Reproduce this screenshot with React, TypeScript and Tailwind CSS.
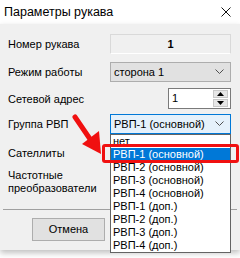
import { ReactNode } from 'react';

const items = [
  'нет',
  'РВП-1 (основной)',
  'РВП-2 (основной)',
  'РВП-3 (основной)',
  'РВП-4 (основной)',
  'РВП-1 (доп.)',
  'РВП-2 (доп.)',
  'РВП-3 (доп.)',
  'РВП-4 (доп.)',
];

function Chevron() {
  return (
    <svg width="9" height="6" viewBox="0 0 9 6" className="shrink-0">
      <path d="M0.5 0.5 L4.5 4.5 L8.5 0.5" fill="none" stroke="#505050" strokeWidth="1" />
    </svg>
  );
}

function Row({ label, children, className }: { label: ReactNode; children?: ReactNode; className: string }) {
  return (
    <div className={`flex items-center justify-between pl-2 pr-[9px] ${className}`}>
      <span className="leading-[14px]">{label}</span>
      {children}
    </div>
  );
}

export default function App() {
  return (
    <div className="relative w-[240px] h-[258px] overflow-hidden bg-white text-[11px] text-black font-['Liberation_Sans',sans-serif]">
      {/* заголовок окна */}
      <div className="flex items-center justify-between h-[24px] pl-[4px] pr-[9px] bg-white">
        <span className="text-[12.5px]">Параметры рукава</span>
        <svg width="10" height="10" viewBox="0 0 10 10">
          <path d="M0.5 0.5 L9.5 9.5 M9.5 0.5 L0.5 9.5" stroke="#111" strokeWidth="1" />
        </svg>
      </div>

      {/* тело диалога */}
      <div className="flex flex-col h-[226px] bg-[#f0f0f0] pt-[10px] shadow-[0_3px_6px_rgba(0,0,0,0.25)]">
        <Row label="Номер рукава" className="h-[20px]">
          <div className="flex items-center justify-center w-[121px] h-[20px] border border-[#d9d9d9] border-b-white font-bold">1</div>
        </Row>

        <Row label="Режим работы" className="h-[20px] mt-[8px]">
          <div className="flex items-center justify-between w-[121px] h-[20px] border border-[#adadad] bg-[#e1e1e1] pl-[3px] pr-[6px]">
            <span>сторона 1</span>
            <Chevron />
          </div>
        </Row>

        <Row label="Сетевой адрес" className="h-[21px] mt-[6px]">
          <div className="flex items-center justify-between w-[63px] h-[21px] border border-[#7a7a7a] bg-white pl-[3px] pr-[2px]">
            <span>1</span>
            <div className="flex flex-col gap-px">
              <div className="flex items-center justify-center w-[15px] h-[8px] bg-[#e6e6e6] border border-[#c8c8c8]">
                <svg width="7" height="4" viewBox="0 0 7 4"><path d="M3.5 0 L7 4 L0 4 Z" fill="#000" /></svg>
              </div>
              <div className="flex items-center justify-center w-[15px] h-[8px] bg-[#e6e6e6] border border-[#c8c8c8]">
                <svg width="7" height="4" viewBox="0 0 7 4"><path d="M0 0 L7 0 L3.5 4 Z" fill="#000" /></svg>
              </div>
            </div>
          </div>
        </Row>

        <Row label="Группа РВП" className="h-[20px] mt-[5px]">
          <div className="flex items-center justify-between w-[121px] h-[20px] border border-[#0078d7] bg-[#e5f1fb] pl-[3px] pr-[6px]">
            <span>РВП-1 (основной)</span>
            <Chevron />
          </div>
        </Row>

        <Row label="Сателлиты" className="h-[14px] mt-[12px]" />

        <div className="pl-2 mt-[9px] leading-[13px]">
          Частотные
          <br />
          преобразователи
        </div>

        <div className="mx-[3px] mt-[14px] h-px bg-[#a0a0a0]" />

        <div className="flex pl-[32px] mt-[8px]">
          <div className="flex items-center justify-center w-[73px] h-[23px] border border-[#adadad] bg-[#e1e1e1]">Отмена</div>
        </div>
      </div>

      {/* раскрытый список */}
      <div className="absolute left-[110px] top-[134px] w-[121px] border border-[#646464] bg-white">
        {items.map((it, i) => (
          <div
            key={it}
            className={`h-[13px] leading-[13px] pl-[2px] ${i === 1 ? 'bg-[#0078d7] text-white' : ''}`}
          >
            {it}
          </div>
        ))}
      </div>

      {/* красная рамка */}
      <div className="absolute left-[102px] top-[144px] w-[137px] h-[19px] border-[3px] border-[#f01010] rounded-[3px]" />

      {/* красная стрелка */}
      <svg className="absolute left-0 top-0" width="240" height="258" viewBox="0 0 240 258">
        <line x1="75" y1="117" x2="90" y2="139" stroke="#f01010" strokeWidth="5" strokeLinecap="round" />
        <polygon points="101,154 82,144 99,131" fill="#f01010" />
      </svg>
    </div>
  );
}
